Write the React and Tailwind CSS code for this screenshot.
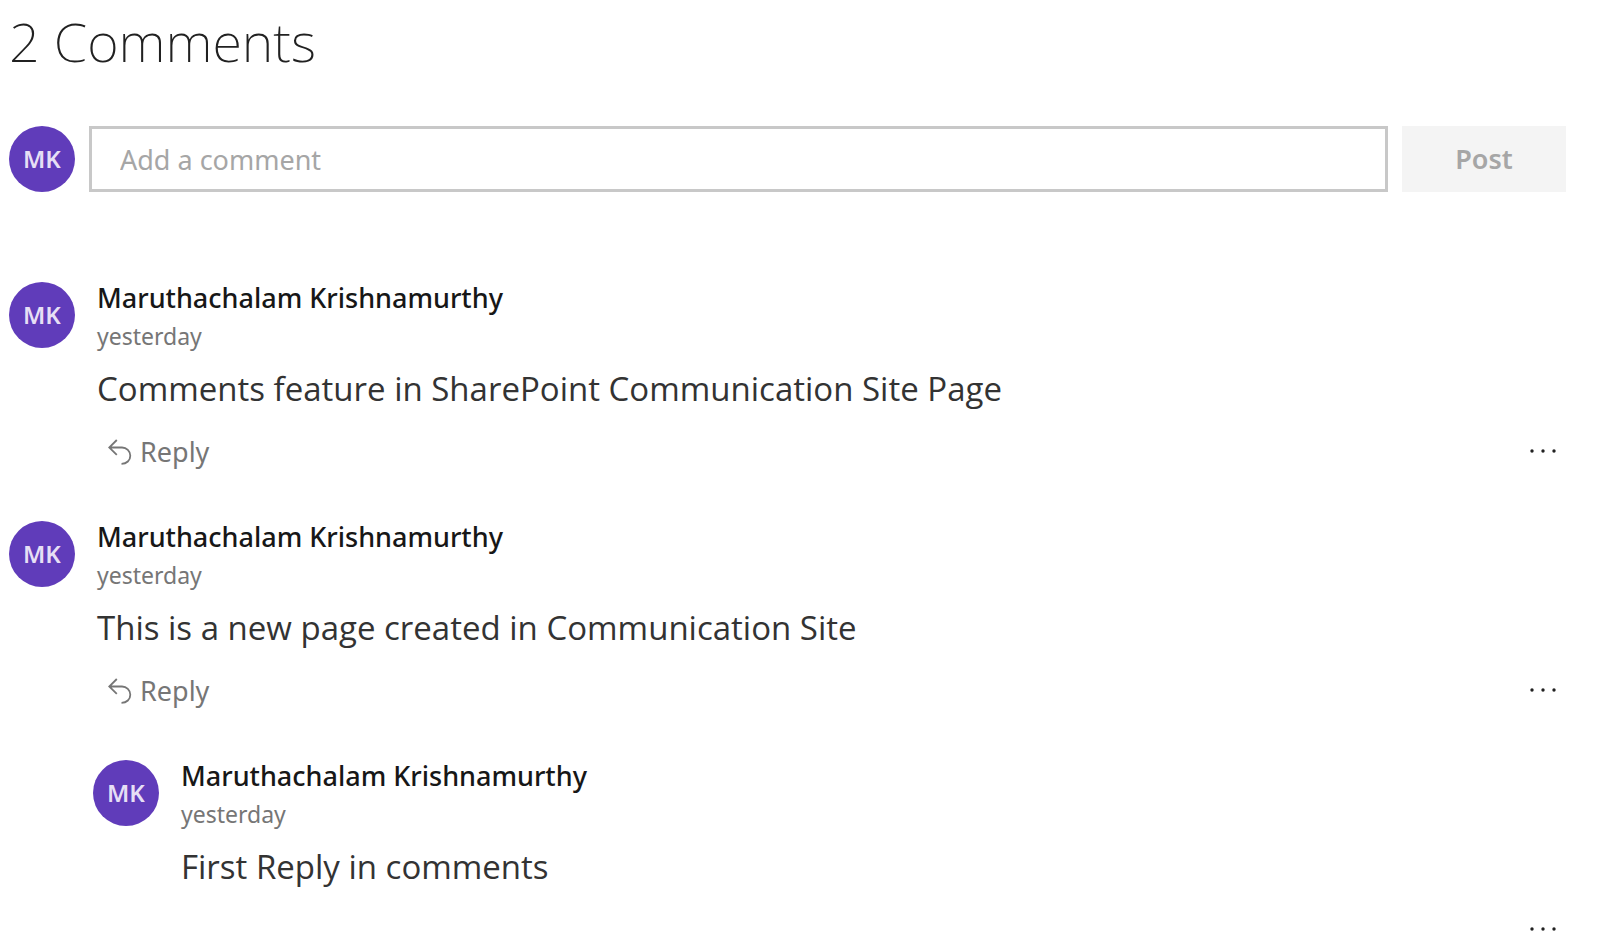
import { useState } from 'react';

const COMMENTS = [
  { id: 1, text: 'Comments feature in SharePoint Communication Site Page', canReply: true },
  { id: 2, text: 'This is a new page created in Communication Site', canReply: true },
  { id: 3, text: 'First Reply in comments', isReply: true },
];

const Avatar = () => (
  <div className="flex size-[66px] shrink-0 items-center justify-center rounded-full bg-[#603cba] text-2xl font-semibold text-[#e6dff5]">
    MK
  </div>
);

const ReplyIcon = () => (
  <svg width="24" height="26" viewBox="0 0 24 26" fill="none" stroke="currentColor" strokeWidth="1.8" aria-hidden="true">
    <path d="M8.8 1 1.2 8.5l7.6 7.4M1.2 8.5H14a8.3 8.3 0 0 1 8.3 8.2c0 4.6-3.6 8.1-8.8 8.1" />
  </svg>
);

const Comment = ({ comment }) => (
  <li className={comment.isReply ? 'flex gap-[22px] pl-[84px]' : 'flex gap-[22px]'}>
    <Avatar />
    <div className="min-w-0 flex-1">
      <h2 className="text-[27px] leading-8 font-medium text-[#171717]">Maruthachalam Krishnamurthy</h2>
      <p className="mt-[6px] text-[23px] leading-8 text-[#767676]">yesterday</p>
      <p className="mt-[17px] font-['Open_Sans','Noto_Sans',sans-serif] text-[33px] leading-10 text-[#333333]">{comment.text}</p>
      <div className="mt-[34px] flex h-4 items-center justify-between pr-[9px] pl-[11px]">
        {comment.canReply ? (
          <button type="button" className="flex items-center gap-2 pt-[2px] text-[27px] text-[#767676]">
            <ReplyIcon />
            Reply
          </button>
        ) : (
          <span />
        )}
        <button type="button" aria-label="More options" className="text-[#212121]">
          <svg width="28" height="4" viewBox="0 0 28 4" fill="currentColor" aria-hidden="true">
            <circle cx="3" cy="2" r="1.7" />
            <circle cx="14" cy="2" r="1.7" />
            <circle cx="25" cy="2" r="1.7" />
          </svg>
        </button>
      </div>
    </div>
  </li>
);

const App = () => {
  const [draft, setDraft] = useState('');

  return (
    <main className="bg-white pt-[9px] pr-[34px] pl-[9px] font-['Noto_Sans',sans-serif]">
      <h1 className="text-[54px] leading-[64px] font-extralight text-[#212121]">2 Comments</h1>

      {/* New comment */}
      <form className="mt-[53px] flex items-center" onSubmit={(e) => e.preventDefault()}>
        <Avatar />
        <input
          type="text"
          aria-label="Add a comment"
          placeholder="Add a comment"
          value={draft}
          onChange={(e) => setDraft(e.target.value)}
          className="ml-[14px] h-[66px] min-w-0 flex-1 border-[3px] border-[#c8c8c8] px-7 text-[27px] text-[#333333] placeholder:text-[#a6a6a6]"
        />
        <button type="submit" className="ml-[14px] h-[66px] w-[164px] bg-[#f4f4f4] text-[27px] font-semibold text-[#a6a6a6]">
          Post
        </button>
      </form>

      {/* Comment list */}
      <ul className="mt-[90px] flex flex-col gap-[62px]">
        {COMMENTS.map((comment) => (
          <Comment key={comment.id} comment={comment} />
        ))}
      </ul>
    </main>
  );
};

export default App;
